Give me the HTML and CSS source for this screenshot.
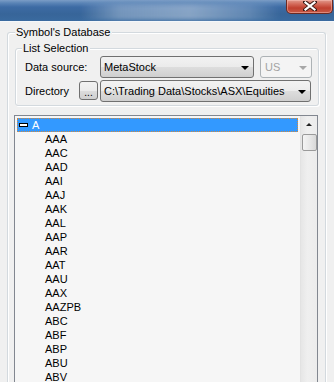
FILE: index.html
```html
<!DOCTYPE html>
<html>
<head>
<meta charset="utf-8">
<link rel="stylesheet" href="styles.css">
</head>
<body>
<div class="window">
  <div class="titlebar">
    <div class="glow"></div>
    <div class="close"><svg width="14" height="10" viewBox="0 0 14 10"><path d="M2 1 L12 9 M12 1 L2 9" stroke="#3a1a16" stroke-width="4" stroke-linecap="square" fill="none"/><path d="M2.5 1.5 L11.5 8.5 M11.5 1.5 L2.5 8.5" stroke="#ffffff" stroke-width="2.2" stroke-linecap="square" fill="none"/></svg></div>
  </div>
  <div class="body">
    <div class="group outer">
      <span class="group-title">Symbol's Database</span>
      <div class="group inner">
        <span class="group-title">List Selection</span>
        <div class="row">
          <span class="label ds">Data source:</span>
          <div class="combo source"><span class="ctext">MetaStock</span><span class="arrow"></span></div>
          <div class="combo disabled us"><span class="ctext">US</span><span class="arrow"></span></div>
        </div>
        <div class="row r2">
          <span class="label dir">Directory</span>
          <div class="btn">...</div>
          <div class="combo path"><span class="ctext">C:\Trading Data\Stocks\ASX\Equities</span><span class="arrow"></span></div>
        </div>
      </div>
      <div class="listbox">
        <div class="items">
          <div class="item sel"><span class="minus"></span><span>A</span></div>
          <div class="item">AAA</div>
          <div class="item">AAC</div>
          <div class="item">AAD</div>
          <div class="item">AAI</div>
          <div class="item">AAJ</div>
          <div class="item">AAK</div>
          <div class="item">AAL</div>
          <div class="item">AAP</div>
          <div class="item">AAR</div>
          <div class="item">AAT</div>
          <div class="item">AAU</div>
          <div class="item">AAX</div>
          <div class="item">AAZPB</div>
          <div class="item">ABC</div>
          <div class="item">ABF</div>
          <div class="item">ABP</div>
          <div class="item">ABU</div>
          <div class="item">ABV</div>
        </div>
        <div class="scrollbar">
          <div class="up"></div>
          <div class="thumb"></div>
        </div>
      </div>
    </div>
  </div>
</div>
</body>
</html>
```

FILE: styles.css
```css
html, body {
  margin: 0;
  padding: 0;
}
body {
  width: 334px;
  height: 382px;
  overflow: hidden;
  background: #f0f0f0;
  font-family: "Liberation Sans", Arial, sans-serif;
  font-size: 11px;
  color: #000;
}
.window {
  width: 334px;
  height: 382px;
  display: flex;
  flex-direction: column;
}
.titlebar {
  height: 21px;
  flex: none;
  position: relative;
  display: flex;
  justify-content: flex-end;
  background: linear-gradient(#7b9dc6 0px, #5a84b6 3px, #3d6ba4 7px, #376599 14px, #3a6a9f 21px);
  border-bottom: 1px solid #f4f7fa;
  overflow: hidden;
}
.glow {
  position: absolute;
  left: 80px;
  top: 4px;
  width: 200px;
  height: 16px;
  background: linear-gradient(90deg, rgba(200,215,232,0) 0%, rgba(190,208,228,0.45) 20%, rgba(200,215,232,0.55) 55%, rgba(170,195,222,0.35) 85%, rgba(200,215,232,0) 100%);
  filter: blur(2px);
}
.close {
  position: relative;
  margin-right: 1px;
  width: 45px;
  height: 13px;
  border: 1px solid #6b2a23;
  border-top: none;
  border-radius: 0 0 5px 5px;
  background: linear-gradient(#e09a8d 0px, #d46a5a 4px, #c0402f 8px, #c85a46 13px);
  box-shadow: inset 0 0 0 1px rgba(255,200,190,0.45);
  display: flex;
  align-items: center;
  justify-content: center;
}
.close svg {
  display: block;
  margin-top: -1px;
}
.body {
  flex: 1;
  padding: 10px 8px 0 7px;
  display: flex;
  flex-direction: column;
  background: #f0f0f0;
}
.group {
  border: 1px solid #d3d9de;
  border-radius: 3px;
  position: relative;
  box-shadow: inset 1px 1px 0 #ffffff, 1px 1px 0 #ffffff;
}
.group-title {
  position: absolute;
  top: -7px;
  background: #f0f0f0;
  line-height: 13px;
  padding: 0 2px 0 1px;
  white-space: nowrap;
}
.outer {
  flex: 1;
  padding: 15px 6px 0 7px;
  border-bottom: none;
  border-radius: 3px 3px 0 0;
}
.outer > .group-title {
  left: 7px;
}
.inner {
  padding: 7px 6px 3px 9px;
  display: flex;
  flex-direction: column;
  gap: 2px;
}
.inner > .group-title {
  left: 6px;
}
.row {
  display: flex;
  align-items: center;
  height: 22px;
}
.label {
  flex: none;
  line-height: 13px;
}
.ds {
  width: 75px;
}
.dir {
  width: 54px;
}
.combo {
  height: 20px;
  border: 1px solid #707070;
  border-radius: 3px;
  background: linear-gradient(#f2f2f2 0%, #ebebeb 50%, #dddddd 51%, #cfcfcf 100%);
  display: flex;
  align-items: center;
  box-sizing: content-box;
  position: relative;
}
.ctext {
  flex: 1;
  padding-left: 3px;
  white-space: nowrap;
  line-height: 13px;
}
.arrow {
  width: 0;
  height: 0;
  border-left: 4px solid transparent;
  border-right: 4px solid transparent;
  border-top: 4px solid #000;
  margin-right: 4px;
  margin-top: 1px;
}
.source {
  width: 152px;
}
.us {
  width: 50px;
  margin-left: 6px;
  border-color: #adb2b5;
  background: #f4f4f4;
  color: #a3a3a3;
}
.us .ctext {
  padding-left: 4px;
}
.us .arrow {
  border-top-color: #a7a7a7;
}
.btn {
  width: 17px;
  height: 17px;
  border: 1px solid #707070;
  border-radius: 3px;
  background: linear-gradient(#f2f2f2 0%, #ebebeb 50%, #dddddd 51%, #cfcfcf 100%);
  display: flex;
  align-items: flex-end;
  justify-content: center;
  line-height: 13px;
  font-size: 10px;
  margin-right: 2px;
  margin-top: -2px;
  box-sizing: content-box;
}
.path {
  width: 209px;
}
.listbox {
  margin: 9px 1px 0 -1px;
  flex: 1;
  border: 1px solid #828790;
  border-bottom: none;
  background: #f6f6f6;
  display: flex;
}
.items {
  flex: 1;
  padding: 2px 2px 0 2px;
}
.item {
  height: 14px;
  line-height: 14px;
  padding-left: 28px;
  white-space: nowrap;
}
.item.sel {
  background: #3399ff;
  color: #fff;
  padding-left: 2px;
  outline: 1px dotted #d08a40;
  outline-offset: -1px;
  display: flex;
  align-items: center;
}
.minus {
  width: 7px;
  height: 2px;
  background: #fff;
  border: 1px solid #000;
  margin-right: 4px;
  flex: none;
}
.scrollbar {
  width: 16px;
  flex: none;
  background: linear-gradient(90deg, #e6e6e6, #efefef 40%, #ececec);
  border-left: 1px solid #e2e2e2;
  display: flex;
  flex-direction: column;
  align-items: center;
}
.up {
  width: 0;
  height: 0;
  border-left: 3px solid transparent;
  border-right: 3px solid transparent;
  border-bottom: 3px solid #222;
  margin-top: 7px;
  margin-bottom: 8px;
}
.thumb {
  width: 13px;
  height: 15px;
  border: 1px solid #9a9a9a;
  border-radius: 2px;
  background: linear-gradient(90deg, #f4f4f4, #e8e8e8 50%, #d8d8d8);
}
```
